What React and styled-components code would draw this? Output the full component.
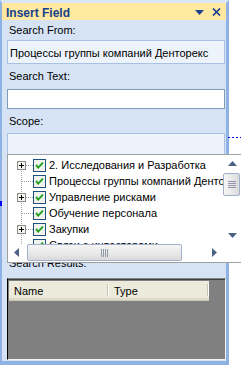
import React from 'react';
import styled, { createGlobalStyle } from 'styled-components';

const Global = createGlobalStyle`
  html, body { margin: 0; padding: 0; background: #fff; overflow: hidden; }
  body {
    font-family: "Liberation Sans", Arial, sans-serif;
    font-size: 11px;
    color: #000;
  }
`;

const Page = styled.div`
  position: relative;
  width: 241px;
  height: 365px;
  overflow: hidden;
  background: #fff;
`;

const Panel = styled.div`
  box-sizing: border-box;
  width: 229px;
  height: 365px;
  display: flex;
  flex-direction: column;
  background: #d5e3f4;
  border-top: 3px solid #dce7f6;
  border-left: 2px solid #8fb2e4;
  border-right: 3px solid #8fb2e4;
  border-bottom: 4px solid #8fb2e4;
`;

const TitleBar = styled.div`
  flex: none;
  height: 17px;
  display: flex;
  align-items: center;
  justify-content: space-between;
  padding: 0 5px 0 4px;
  background: #ffe8a0;
`;

const Title = styled.div`
  font-weight: bold;
  font-size: 12px;
  color: #15428b;
  padding-top: 2px;
`;

const TitleButtons = styled.div`
  display: flex;
  align-items: center;
  gap: 8px;
  padding-top: 1px;
`;

const Label = styled.div`
  flex: none;
  line-height: 13px;
  padding: ${p => p.$pt}px 0 ${p => p.$pb}px 7px;
  white-space: nowrap;
`;

const Field = styled.div`
  flex: none;
  box-sizing: border-box;
  margin-left: 5px;
  width: 218px;
  height: ${p => p.$h}px;
  border: 1px solid ${p => (p.$soft ? '#a9c1e3' : '#7f9db9')};
  background: ${p => (p.$soft ? '#edf3fb' : '#fff')};
  padding: 4px 0 0 2px;
  line-height: 16px;
  white-space: nowrap;
  overflow: hidden;
`;

const ScopeArea = styled.div`
  flex: none;
  position: relative;
  height: 118px;
`;

const Popup = styled.div`
  position: absolute;
  top: 21px;
  left: 5px;
  box-sizing: border-box;
  width: 235px;
  height: 109px;
  border: 1px solid #a0a0a0;
  background: #fff;
  display: grid;
  grid-template-columns: 215px 18px;
  grid-template-rows: 89px 17px;
  z-index: 2;
`;

const TreeView = styled.div`
  overflow: hidden;
  padding-top: 2px;
`;

const TreeRow = styled.div`
  display: flex;
  align-items: center;
  height: 16px;
  padding-left: 9px;
  white-space: nowrap;
  & > svg { flex: none; }
`;

const RowText = styled.span`
  flex: none;
  margin-left: 3px;
  line-height: 16px;
`;

const VScroll = styled.div`
  display: flex;
  flex-direction: column;
  align-items: flex-start;
`;

const ArrowButton = styled.div`
  flex: none;
  width: ${p => p.$w}px;
  height: ${p => p.$h}px;
  display: flex;
  align-items: center;
  justify-content: center;
`;

const Thumb = styled.div`
  flex: none;
  box-sizing: border-box;
  width: ${p => p.$w}px;
  height: ${p => p.$h}px;
  margin: ${p => p.$m};
  border: 1px solid #a2b0cf;
  border-radius: 2px;
  background: linear-gradient(${p => (p.$vertical ? '90deg' : '180deg')}, #f5f5f5 0%, #e9e9e9 55%, #d9d9d9 100%);
  display: flex;
  align-items: center;
  justify-content: center;
`;

const Spacer = styled.div`
  flex: 1;
`;

const HScroll = styled.div`
  display: flex;
  align-items: center;
`;

const Corner = styled.div`
  background: #fff;
`;

const ResultsList = styled.div`
  flex: 1;
  box-sizing: border-box;
  margin: 3px 0 1px 5px;
  width: 219px;
  border-top: 1px solid #808080;
  border-left: 1px solid #000;
  border-right: 1px solid #f4f4f4;
  border-bottom: 1px solid #f4f4f4;
  box-shadow: inset 0 1px 0 #404040;
  background: #808080;
  padding-top: 2px;
`;

const Header = styled.div`
  display: flex;
  width: 200px;
  height: 20px;
  margin-left: 1px;
  box-sizing: border-box;
  background: #ebeadb;
  border-bottom: 1px solid #cbc7b8;
  box-shadow: inset 0 -2px 0 #dedac9;
`;

const HeaderCell = styled.div`
  box-sizing: border-box;
  width: 100px;
  padding-left: 5px;
  display: flex;
  align-items: center;
  position: relative;
  &::after {
    content: '';
    position: absolute;
    right: 1px;
    top: 3px;
    bottom: 4px;
    width: 1px;
    background: #c7c5b2;
    box-shadow: 1px 0 0 #fff;
  }
`;

const DashLine = styled.div`
  position: absolute;
  left: 228px;
  top: 137px;
  width: 13px;
  height: 1px;
  background: repeating-linear-gradient(90deg, #0000ff 0 2px, transparent 2px 4px);
`;

const Tick = styled.div`
  position: absolute;
  left: 0;
  top: 201px;
  width: 2px;
  height: 5px;
  background: #0000ff;
`;

const DropTriangle = () => (
  <svg width="9" height="5" viewBox="0 0 9 5">
    <polygon points="0,0 9,0 4.5,5" fill="#1e428f" />
  </svg>
);

const CloseX = () => (
  <svg width="9" height="8" viewBox="0 0 9 8">
    <path d="M1 0.5 L8 7.5 M8 0.5 L1 7.5" stroke="#1e428f" strokeWidth="1.7" />
  </svg>
);

const Connector = ({ first, expandable }) => (
  <svg width="16" height="16" viewBox="0 0 16 16" shapeRendering="crispEdges">
    <line x1="4.5" y1={first ? 8 : 0} x2="4.5" y2="16" stroke="#a0a0a0" strokeDasharray="1 1" />
    <line x1={expandable ? 9 : 5} y1="8.5" x2="16" y2="8.5" stroke="#a0a0a0" strokeDasharray="1 1" />
    {expandable && (
      <>
        <rect x="0.5" y="4.5" width="8" height="8" fill="#f4f4ef" stroke="#8a8a8a" />
        <line x1="2" y1="8.5" x2="7" y2="8.5" stroke="#000" />
        <line x1="4.5" y1="6" x2="4.5" y2="11" stroke="#000" />
      </>
    )}
  </svg>
);

const CheckBox = () => (
  <svg width="13" height="13" viewBox="0 0 13 13">
    <rect x="0.5" y="0.5" width="12" height="12" fill="#f3f3ee" stroke="#1c5180" />
    <path d="M3 6 L5.2 8.6 L10 3.6" stroke="#21a121" strokeWidth="2" fill="none" />
  </svg>
);

const Arrow = ({ dir }) => {
  const pts = {
    up: '0,5 9,5 4.5,0',
    down: '0,0 9,0 4.5,5',
    left: '5,0 5,9 0,4.5',
    right: '0,0 0,9 5,4.5',
  }[dir];
  const vertical = dir === 'up' || dir === 'down';
  return (
    <svg width={vertical ? 9 : 5} height={vertical ? 5 : 9} viewBox={vertical ? '0 0 9 5' : '0 0 5 9'}>
      <polygon points={pts} fill="#4d6185" />
    </svg>
  );
};

const Grip = ({ vertical }) => (
  <svg width={vertical ? 8 : 7} height={vertical ? 7 : 8} viewBox={vertical ? '0 0 8 7' : '0 0 7 8'} shapeRendering="crispEdges">
    {[0, 2, 4, 6].map(i =>
      vertical ? (
        <line key={i} x1="0" y1={i + 0.5} x2="8" y2={i + 0.5} stroke="#8e96a8" />
      ) : (
        <line key={i} x1={i + 0.5} y1="0" x2={i + 0.5} y2="8" stroke="#8e96a8" />
      )
    )}
  </svg>
);

const items = [
  { text: '2. Исследования и Разработка', exp: true },
  { text: 'Процессы группы компаний Денторекс', exp: false },
  { text: 'Управление рисками', exp: true },
  { text: 'Обучение персонала', exp: false },
  { text: 'Закупки', exp: true },
  { text: 'Связи с инвесторами', exp: false },
];

export default function App() {
  return (
    <Page>
      <Global />
      <Panel>
        <TitleBar>
          <Title>Insert Field</Title>
          <TitleButtons>
            <DropTriangle />
            <CloseX />
          </TitleButtons>
        </TitleBar>
        <Label $pt={4} $pb={3}>Search From:</Label>
        <Field $h={24} $soft>Процессы группы компаний Денторекс</Field>
        <Label $pt={6} $pb={6}>Search Text:</Label>
        <Field $h={20} />
        <Label $pt={6} $pb={5}>Scope:</Label>
        <ScopeArea>
          <Field $h={24} $soft />
          <Popup>
            <TreeView>
              {items.map((it, i) => (
                <TreeRow key={it.text}>
                  <Connector first={i === 0} expandable={it.exp} />
                  <CheckBox />
                  <RowText>{it.text}</RowText>
                </TreeRow>
              ))}
            </TreeView>
            <VScroll>
              <ArrowButton $w={18} $h={17}><Arrow dir="up" /></ArrowButton>
              <Thumb $vertical $w={17} $h={23} $m="1px 0 0 0"><Grip vertical /></Thumb>
              <Spacer />
              <ArrowButton $w={18} $h={17}><Arrow dir="down" /></ArrowButton>
            </VScroll>
            <HScroll>
              <ArrowButton $w={17} $h={17}><Arrow dir="left" /></ArrowButton>
              <Thumb $w={155} $h={17} $m="0 0 0 2px"><Grip /></Thumb>
              <Spacer />
              <ArrowButton $w={17} $h={17}><Arrow dir="right" /></ArrowButton>
            </HScroll>
            <Corner />
          </Popup>
        </ScopeArea>
        <Label $pt={6} $pb={5}>Search Results:</Label>
        <ResultsList>
          <Header>
            <HeaderCell>Name</HeaderCell>
            <HeaderCell>Type</HeaderCell>
          </Header>
        </ResultsList>
      </Panel>
      <DashLine />
      <Tick />
    </Page>
  );
}
